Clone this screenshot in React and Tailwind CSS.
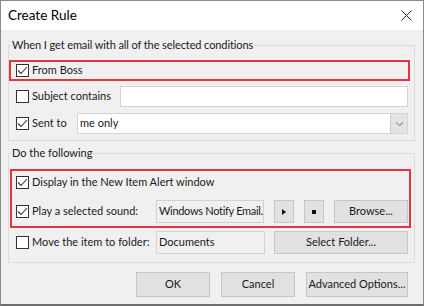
import React from "react";

const Check = ({ checked }) => (
  <span className="w-[13px] h-[13px] shrink-0 border border-[#333333] bg-white flex items-center justify-center">
    {checked && (
      <svg width="11" height="11" viewBox="0 0 11 11">
        <path d="M1 5.5 L4 8.5 L10 2" fill="none" stroke="#333333" strokeWidth="1.1" />
      </svg>
    )}
  </span>
);

const Btn = ({ children, className = "" }) => (
  <button
    className={`h-[23px] bg-[#e1e1e1] border border-[#c6c6c6] text-[#1a1a1a] flex items-center justify-center shrink-0 whitespace-nowrap ${className}`}
  >
    {children}
  </button>
);

const Field = ({ children, className = "" }) => (
  <div
    className={`h-[23px] bg-[#f0f0f0] border border-[#d2d2d2] flex items-center px-[2px] whitespace-nowrap overflow-hidden shrink-0 ${className}`}
  >
    {children}
  </div>
);

export default function App() {
  return (
    <div
      className="w-[424px] h-[306px] bg-[#f0f0f0] border border-[#8a8a8a] border-b-2 border-b-[#6e6e6e] flex flex-col text-[11px] text-[#1a1a1a] overflow-hidden"
      style={{ fontFamily: 'Lato, "Noto Sans", Arial, sans-serif' }}
    >
      {/* title bar */}
      <div className="h-[29px] bg-white flex items-center justify-between pl-[7px] pr-[11px] shrink-0">
        <span className="text-[13.5px] text-black">Create Rule</span>
        <svg width="11" height="11" viewBox="0 0 11 11">
          <path d="M0.5 0.5 L10.5 10.5 M10.5 0.5 L0.5 10.5" stroke="#222" strokeWidth="1" />
        </svg>
      </div>

      {/* conditions */}
      <fieldset className="ml-[7px] mt-[7px] w-[407px] border border-[#dcdcdc] pb-[6px]">
        <legend className="ml-[2px] px-[1px] leading-[16px] tracking-[-0.1px]">
          When I get email with all of the selected conditions
        </legend>
        <div className="mt-[7px] w-[401px] h-[21px] border-2 border-[#e6333f] flex items-center pl-[5px] gap-[3px]">
          <Check checked />
          <span>From Boss</span>
        </div>
        <div className="mt-[5px] h-[21px] flex items-center pl-[7px]">
          <Check />
          <span className="ml-[3px] w-[88px] whitespace-nowrap">Subject contains</span>
          <div className="w-[288px] h-[21px] bg-white border border-[#d4d4d4]"></div>
        </div>
        <div className="mt-[6px] h-[21px] flex items-center pl-[7px]">
          <Check checked />
          <span className="ml-[3px] w-[45px] whitespace-nowrap">Sent to</span>
          <div className="w-[331px] h-[21px] bg-white border border-[#d4d4d4] flex items-center">
            <span className="flex-1 pl-[2px]">me only</span>
            <div className="w-[17px] h-[19px] bg-[#e4e4e4] border-l border-[#d0d0d0] flex items-center justify-center">
              <svg width="9" height="6" viewBox="0 0 9 6">
                <path d="M1 1.5 L4.5 4.5 L8 1.5" fill="none" stroke="#6a6a6a" strokeWidth="1" />
              </svg>
            </div>
          </div>
        </div>
      </fieldset>

      {/* actions */}
      <fieldset className="ml-[7px] mt-[4px] w-[407px] border border-[#dcdcdc] pb-[8px]">
        <legend className="ml-[2px] px-[1px] leading-[16px]">Do the following</legend>
        <div className="mt-[8px] ml-[1px] w-[401px] border-2 border-[#e6333f] pl-[4px] pt-[1px] pb-[3px] flex flex-col">
          <div className="h-[21px] flex items-center gap-[3px]">
            <Check checked />
            <span className="whitespace-nowrap">Display in the New Item Alert window</span>
          </div>
          <div className="mt-[7px] h-[23px] flex items-center">
            <Check checked />
            <span className="ml-[3px] w-[124px] whitespace-nowrap">Play a selected sound:</span>
            <Field className="w-[108px] tracking-[-0.3px]">Windows Notify Email.</Field>
            <Btn className="ml-[10px] w-[20px]">
              <svg width="4" height="6" viewBox="0 0 4 6">
                <path d="M0 0 L4 3 L0 6 Z" fill="#111" />
              </svg>
            </Btn>
            <Btn className="ml-[10px] w-[20px]">
              <span className="w-[4px] h-[4px] bg-[#111]"></span>
            </Btn>
            <Btn className="ml-[10px] w-[74px]">Browse...</Btn>
          </div>
        </div>
        <div className="mt-[3px] h-[23px] flex items-center pl-[7px]">
          <Check />
          <span className="ml-[3px] w-[124px] whitespace-nowrap">Move the item to folder:</span>
          <Field className="w-[109px]">Documents</Field>
          <Btn className="ml-[9px] w-[134px]">Select Folder...</Btn>
        </div>
      </fieldset>

      {/* buttons */}
      <div className="mt-[9px] flex justify-end gap-[11px] pr-[15px]">
        <Btn className="w-[74px] h-[25px] border-[#0078d7]">OK</Btn>
        <Btn className="w-[74px] h-[25px]">Cancel</Btn>
        <Btn className="w-[102px] h-[25px]">Advanced Options...</Btn>
      </div>
    </div>
  );
}
